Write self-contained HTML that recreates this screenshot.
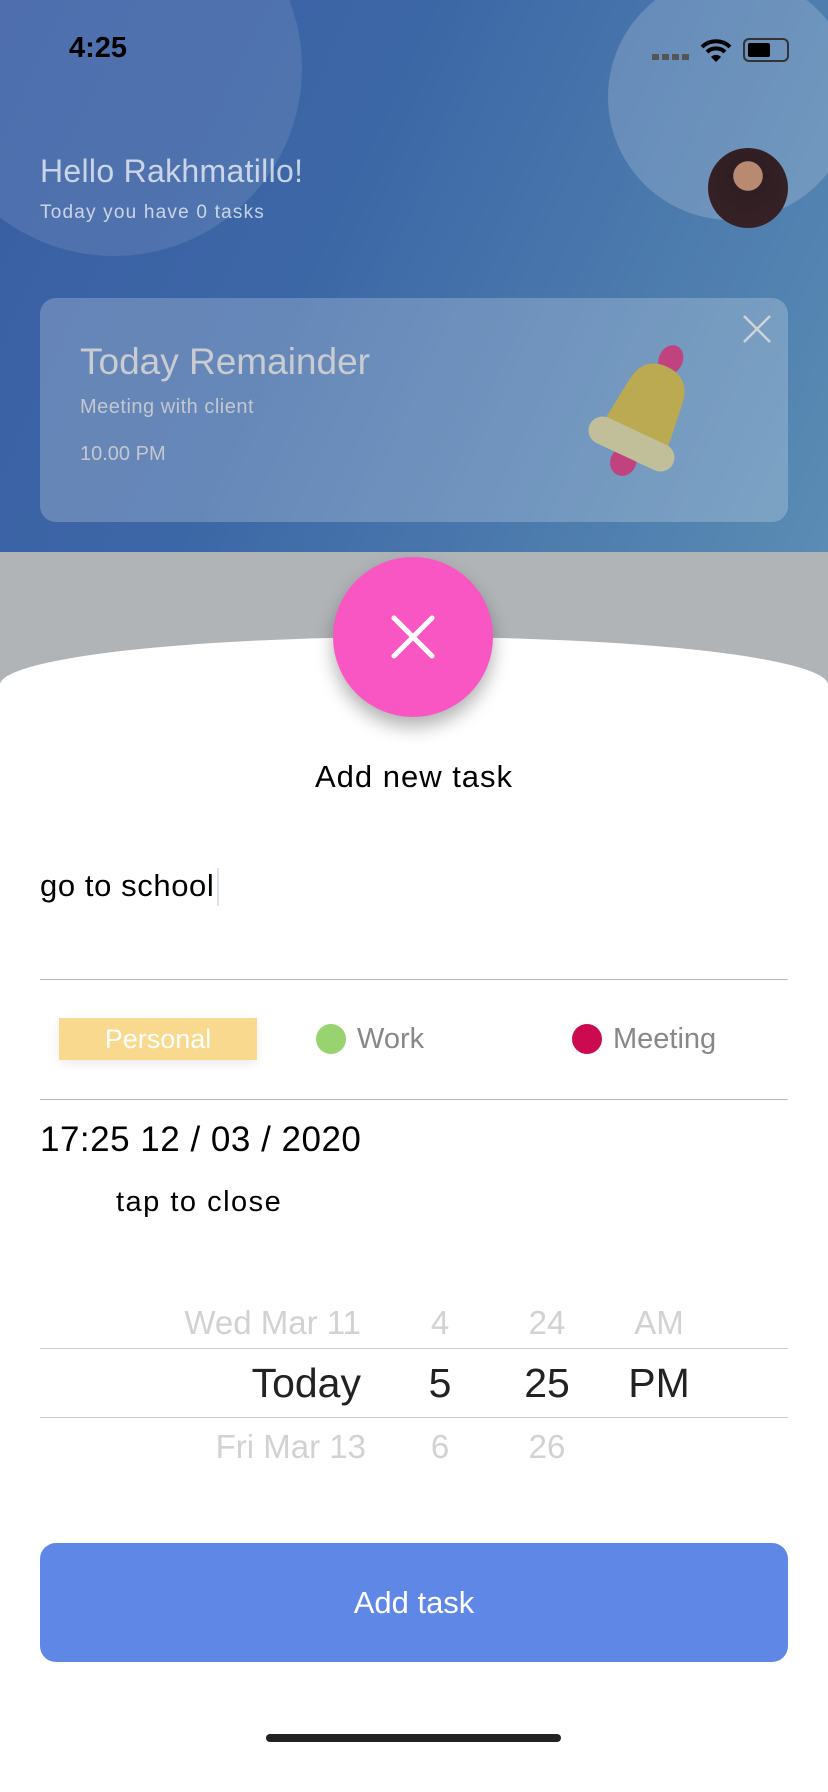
<!DOCTYPE html>
<html><head><meta charset="utf-8"><style>
*{margin:0;padding:0;box-sizing:border-box}
body{width:828px;height:1792px;overflow:hidden;position:relative;background:#b0b4b7;font-family:"Liberation Sans",sans-serif}
.hdr{position:absolute;left:0;top:0;width:828px;height:552px;background:linear-gradient(115deg,#3a5ea4 0%,#3c67a6 40%,#5a8cb4 100%);overflow:hidden}
.c1{position:absolute;left:-74px;top:-120px;width:376px;height:376px;border-radius:50%;background:rgba(255,255,255,0.1)}
.c2{position:absolute;left:608px;top:-26px;width:246px;height:246px;border-radius:50%;background:rgba(255,255,255,0.18)}
.t{position:absolute;white-space:nowrap}
.card{position:absolute;left:40px;top:298px;width:748px;height:224px;border-radius:16px;background:rgba(255,255,255,0.22)}
.sheet{position:absolute;left:0;top:637px;width:828px;height:1155px;background:#fff;border-radius:50% 50% 0 0/48px 48px 0 0}
.fab{position:absolute;left:333px;top:557px;width:160px;height:160px;border-radius:50%;background:#f956c4;box-shadow:0 10px 18px rgba(0,0,0,0.3)}
.line{position:absolute;left:40px;width:748px;height:1px;background:#bbb}
</style></head><body>
<div class="hdr">
 <div class="c1"></div><div class="c2"></div>
 <div class="t" style="left:69px;top:32px;font-size:29px;font-weight:bold;color:#000">4:25</div>
 <div style="position:absolute;left:652px;top:54px;width:38px;height:6px;background:repeating-linear-gradient(90deg,#555 0 7px,transparent 7px 10px)"></div>
 <svg style="position:absolute;left:700px;top:38px" width="32" height="26" viewBox="0 0 32 26"><path d="M2 9a20 20 0 0 1 28 0" stroke="#000" stroke-width="4" fill="none"/><path d="M7 14a13 13 0 0 1 18 0" stroke="#000" stroke-width="4" fill="none"/><path d="M16 24l-5-5a7 7 0 0 1 10 0z" fill="#000"/></svg>
 <div style="position:absolute;left:743px;top:38px;width:46px;height:24px;border:2.5px solid #333;border-radius:6px"><div style="position:absolute;left:3px;top:3px;width:22px;height:14px;background:#000;border-radius:2px"></div></div>
 <div class="t" style="left:40px;top:153px;font-size:32px;font-weight:300;color:rgba(255,255,255,0.7);letter-spacing:0.3px">Hello Rakhmatillo!</div>
 <div class="t" style="left:40px;top:202px;font-size:19px;color:rgba(255,255,255,0.7);letter-spacing:1.2px">Today you have 0 tasks</div>
 <div style="position:absolute;left:708px;top:148px;width:80px;height:80px;border-radius:50%;background:radial-gradient(circle at 50% 35%,#b88a72 0 22%,#2f1e22 23%,#3a2228 100%)"></div>
 <div class="card">
  <div class="t" style="left:40px;top:43px;font-size:37px;color:#c9ccd0">Today Remainder</div>
  <div class="t" style="left:40px;top:98px;font-size:20px;color:#c3c8cf;letter-spacing:0.5px">Meeting with client</div>
  <div class="t" style="left:40px;top:145px;font-size:20px;color:#c3c8cf">10.00 PM</div>
  <svg style="position:absolute;left:702px;top:16px" width="30" height="30"><path d="M2 2L28 28M28 2L2 28" stroke="#d0d4d8" stroke-width="2.5"/></svg>
  <svg style="position:absolute;left:545px;top:42px" width="120" height="150" viewBox="0 0 120 150">
   <g transform="rotate(25 60 75)">
    <ellipse cx="60" cy="14" rx="12" ry="15" fill="#c04380"/>
    <ellipse cx="60" cy="126" rx="13" ry="15" fill="#c04380"/>
    <path d="M24 108 L31 48 Q35 22 60 22 Q85 22 89 48 L96 108 Z" fill="#bbaa52"/>
    <rect x="14" y="93" width="92" height="28" rx="14" fill="#c0bf9a"/>
   </g>
  </svg>
 </div>
</div>
<div class="sheet"></div>
<div class="fab"><svg style="position:absolute;left:57px;top:57px" width="46" height="46"><path d="M4 4L42 42M42 4L4 42" stroke="#fff" stroke-width="5" stroke-linecap="round"/></svg></div>
<div class="t" style="left:0;width:828px;text-align:center;top:759px;font-size:31px;color:#000;letter-spacing:1px">Add new task</div>
<div class="t" style="left:40px;top:868px;font-size:31px;color:#000;letter-spacing:0.6px">go to school</div>
<div style="position:absolute;left:217px;top:868px;width:2px;height:38px;background:#dde3f5"></div>
<div class="line" style="top:979px"></div>
<div style="position:absolute;left:59px;top:1018px;width:198px;height:42px;background:#f9d98e;box-shadow:0 4px 10px rgba(0,0,0,0.08);color:#fff;font-size:27px;text-align:center;line-height:42px">Personal</div>
<div style="position:absolute;left:316px;top:1024px;width:30px;height:30px;border-radius:50%;background:#98d370"></div>
<div class="t" style="left:357px;top:1023px;font-size:29px;color:#888">Work</div>
<div style="position:absolute;left:572px;top:1024px;width:30px;height:30px;border-radius:50%;background:#cc0a50"></div>
<div class="t" style="left:613px;top:1023px;font-size:29px;color:#888">Meeting</div>
<div class="line" style="top:1099px"></div>
<div class="t" style="left:40px;top:1120px;font-size:35px;color:#000;letter-spacing:0.5px">17:25 12 / 03 / 2020</div>
<div class="t" style="left:116px;top:1186px;font-size:29px;color:#000;letter-spacing:1.5px">tap to close</div>
<div class="line" style="top:1348px;background:#ccc"></div>
<div class="line" style="top:1417px;background:#ccc"></div>
<div class="t" style="right:467px;top:1304px;font-size:33px;color:#d2d2d2">Wed Mar 11</div>
<div class="t" style="left:420px;top:1304px;width:40px;text-align:center;font-size:33px;color:#d2d2d2">4</div>
<div class="t" style="left:507px;top:1304px;width:80px;text-align:center;font-size:33px;color:#d2d2d2">24</div>
<div class="t" style="left:619px;top:1304px;width:80px;text-align:center;font-size:33px;color:#d2d2d2">AM</div>
<div class="t" style="right:467px;top:1360px;font-size:41px;color:#222">Today</div>
<div class="t" style="left:420px;top:1360px;width:40px;text-align:center;font-size:41px;color:#222">5</div>
<div class="t" style="left:507px;top:1360px;width:80px;text-align:center;font-size:41px;color:#222">25</div>
<div class="t" style="left:619px;top:1360px;width:80px;text-align:center;font-size:41px;color:#222">PM</div>
<div class="t" style="right:462px;top:1428px;font-size:33px;color:#d2d2d2">Fri Mar 13</div>
<div class="t" style="left:420px;top:1428px;width:40px;text-align:center;font-size:33px;color:#d2d2d2">6</div>
<div class="t" style="left:507px;top:1428px;width:80px;text-align:center;font-size:33px;color:#d2d2d2">26</div>
<div style="position:absolute;left:40px;top:1543px;width:748px;height:119px;border-radius:16px;background:#5f87e6;color:#fff;font-size:31px;text-align:center;line-height:119px">Add task</div>
<div style="position:absolute;left:266px;top:1734px;width:295px;height:8px;border-radius:4px;background:#222"></div>
</body></html>
